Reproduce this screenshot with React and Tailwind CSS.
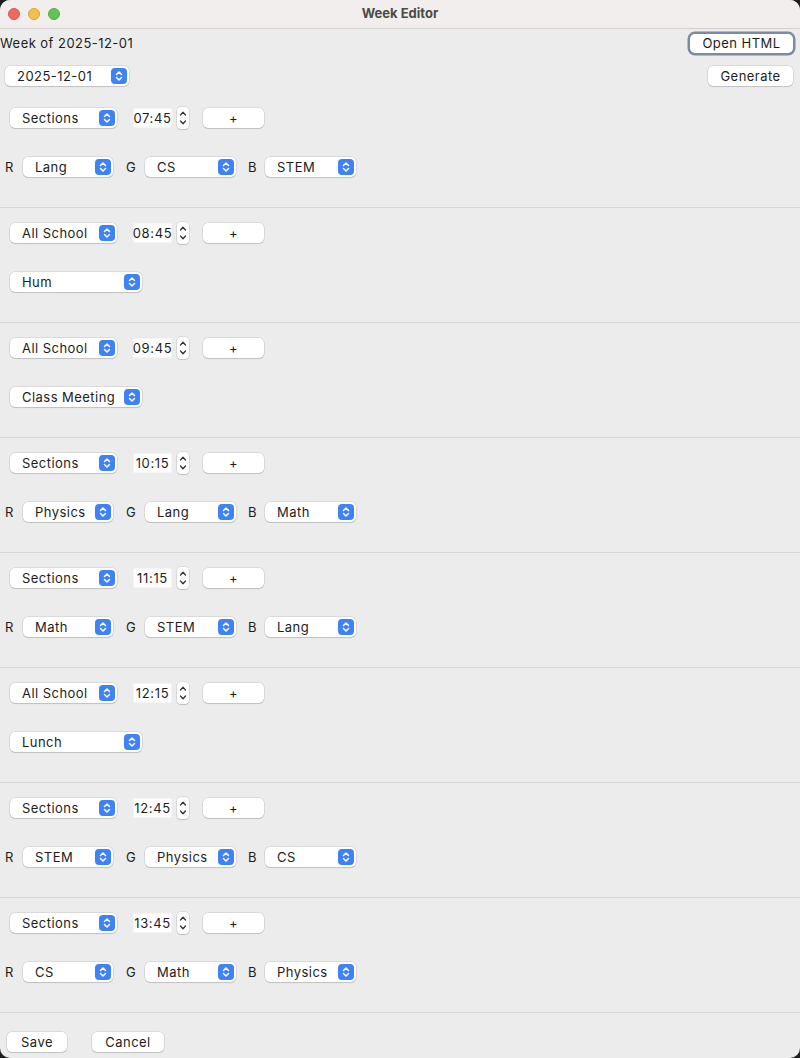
import { useState } from 'react';

const FONT = { fontFamily: 'Inter, "Liberation Sans", sans-serif' };

const blocks = [
  { mode: 'Sections', time: '07:45', rgb: ['Lang', 'CS', 'STEM'] },
  { mode: 'All School', time: '08:45', all: 'Hum' },
  { mode: 'All School', time: '09:45', all: 'Class Meeting' },
  { mode: 'Sections', time: '10:15', rgb: ['Physics', 'Lang', 'Math'] },
  { mode: 'Sections', time: '11:15', rgb: ['Math', 'STEM', 'Lang'] },
  { mode: 'All School', time: '12:15', all: 'Lunch' },
  { mode: 'Sections', time: '12:45', rgb: ['STEM', 'Physics', 'CS'] },
  { mode: 'Sections', time: '13:45', rgb: ['CS', 'Math', 'Physics'] },
];

function Arrows({ className }) {
  return (
    <svg viewBox="0 0 16 16" className={className} fill="none" stroke="currentColor" strokeWidth="1.5" strokeLinecap="round" strokeLinejoin="round">
      <path d="M5.5 6.5 8 4l2.5 2.5" />
      <path d="M5.5 9.5 8 12l2.5-2.5" />
    </svg>
  );
}

function Combo({ value, className = '' }) {
  return (
    <div className={`flex items-center h-5 bg-white rounded-[5px] shadow-[0_0_0_0.5px_rgba(0,0,0,0.15),0_1px_1px_rgba(0,0,0,0.12)] pl-3 pr-[2px] ${className}`}>
      <span className="flex-1 text-[13px] tracking-[0.035em] text-[#1d1d1d] leading-5 whitespace-nowrap">{value}</span>
      <span className="w-4 h-4 shrink-0 rounded-[4px] bg-[#3f82f6] text-white flex items-center justify-center">
        <Arrows className="w-4 h-4" />
      </span>
    </div>
  );
}

function Button({ children, className = '', focused }) {
  return (
    <button
      className={`h-5 bg-white rounded-[5px] text-[13px] tracking-[0.035em] text-[#1d1d1d] leading-5 flex items-center justify-center ${
        focused
          ? 'ring-[2.5px] ring-[#7d8aa3] shadow-[0_1px_1px_rgba(0,0,0,0.15)]'
          : 'shadow-[0_0_0_0.5px_rgba(0,0,0,0.15),0_1px_1px_rgba(0,0,0,0.12)]'
      } ${className}`}
    >
      {children}
    </button>
  );
}

function TimeField({ value }) {
  return (
    <div className="flex items-center">
      <div className="w-[39px] h-5 bg-white flex items-center justify-center text-[13px] tracking-[0.05em] text-[#1d1d1d] leading-5 shadow-[inset_0_0_0_0.5px_rgba(0,0,0,0.08)]">
        {value}
      </div>
      <div className="ml-[5px] w-3 h-[22px] bg-white rounded-[4px] shadow-[0_0_0_0.5px_rgba(0,0,0,0.15),0_1px_1px_rgba(0,0,0,0.12)] flex flex-col items-center justify-center text-[#333]">
        <svg viewBox="0 0 12 22" className="w-3 h-[22px]" fill="none" stroke="currentColor" strokeWidth="1.3" strokeLinecap="round" strokeLinejoin="round">
          <path d="M3.5 8 6 5.2 8.5 8" />
          <path d="M3.5 14 6 16.8 8.5 14" />
        </svg>
      </div>
    </div>
  );
}

function Block({ b }) {
  return (
    <div className="h-[115px] border-b border-[#d6d6d6] pt-[14px]">
      <div className="flex items-center pl-[10px]">
        <Combo value={b.mode} className="w-[107px]" />
        <div className="ml-4">
          <TimeField value={b.time} />
        </div>
        <Button className="ml-[14px] w-[61px]">+</Button>
      </div>
      {b.rgb ? (
        <div className="flex items-center mt-7 pl-[5px] text-[13px] text-[#1d1d1d] leading-5">
          <span className="w-[18px]">R</span>
          <Combo value={b.rgb[0]} className="w-[90px]" />
          <span className="ml-[13px] w-[19px]">G</span>
          <Combo value={b.rgb[1]} className="w-[91px]" />
          <span className="ml-3 w-[17px]">B</span>
          <Combo value={b.rgb[2]} className="w-[91px]" />
        </div>
      ) : (
        <div className="mt-7 pl-[10px]">
          <Combo value={b.all} className="w-[132px]" />
        </div>
      )}
    </div>
  );
}

export default function App() {
  const [week] = useState('2025-12-01');

  return (
    <div className="w-[800px] h-[1058px] bg-[#1e1e1e] overflow-hidden" style={FONT}>
      <div className="w-full h-full bg-[#ececec] rounded-[10px] overflow-hidden flex flex-col">
        {/* title bar */}
        <div className="h-[29px] shrink-0 bg-[#f1eeed] border-b border-[#d3d0cf] relative flex items-center justify-center">
          <div className="absolute left-[8px] top-[8px] flex gap-2">
            <span className="w-3 h-3 rounded-full bg-[#ec6a5e] border border-[#d9574c]" />
            <span className="w-3 h-3 rounded-full bg-[#f4bf4f] border border-[#d9a53c]" />
            <span className="w-3 h-3 rounded-full bg-[#61c554] border border-[#4fae44]" />
          </div>
          <span className="text-[13px] font-bold text-[#4a4a4a]">Week Editor</span>
        </div>

        {/* header */}
        <div className="flex items-center justify-between h-[26px] pt-[2px] pr-[7px]">
          <span className="text-[13px] tracking-[0.035em] leading-5 text-[#1d1d1d]">Week of {week}</span>
          <Button focused className="w-[103px] h-[19px]">Open HTML</Button>
        </div>
        <div className="flex items-center justify-between mt-[11px] pl-[5px] pr-[7px]">
          <Combo value={week} className="w-[124px] pl-[12px]" />
          <Button className="w-[85px]">Generate</Button>
        </div>

        <div className="mt-[7px]">
          {blocks.map((b, i) => (
            <Block key={i} b={b} />
          ))}
        </div>

        <div className="flex items-center pl-[7px] mt-[19px] gap-[25px]">
          <Button className="w-[60px]">Save</Button>
          <Button className="w-[72px]">Cancel</Button>
        </div>
      </div>
    </div>
  );
}
